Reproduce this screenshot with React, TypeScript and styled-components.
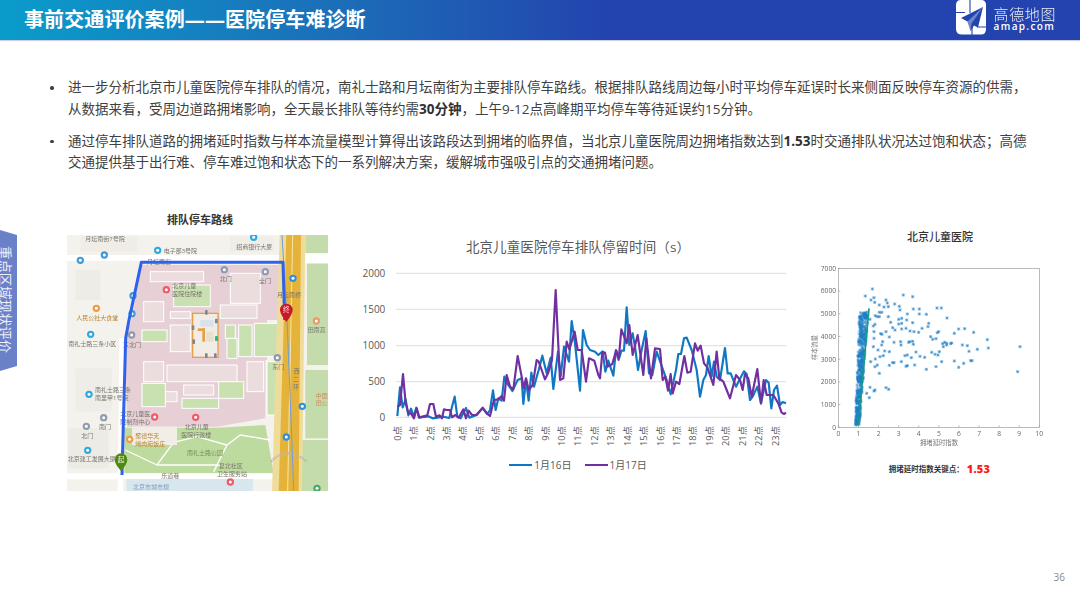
import React from "react";
import styled, { createGlobalStyle } from "styled-components";

const GlobalStyle = createGlobalStyle`
  html, body { margin: 0; padding: 0; background: #ffffff; }
  body { font-family: "Open Sans", "Noto Sans CJK SC", sans-serif; }
`;

const CJK = `"Open Sans", "Noto Sans CJK SC", sans-serif`;

// chart series, read off the picture in 3x crop coordinates
const blue =
  "142,558 150,472 158,532 167,508 175,556 183,536 191,560 199,533 207,563 222,561 235,559 248,565 262,563 278,560 298,564 306,530 314,500 322,560 332,565 348,534 358,563 378,556 398,535 412,552 420,540 429,481 437,540 445,505 455,512 463,440 472,460 487,483 503,450 515,445 520,522 528,450 536,512 544,428 552,470 566,420 577,377 590,430 602,383 610,477 624,365 632,440 642,350 657,395 665,273 675,340 690,482 699,300 710,345 720,360 735,365 745,375 758,364 766,425 775,392 790,437 798,360 808,383 814,362 822,362 830,232 838,345 848,310 855,350 864,420 875,360 887,303 897,430 907,435 920,365 934,405 950,450 962,493 978,420 985,372 993,372 1002,325 1010,323 1025,360 1040,420 1050,500 1060,450 1068,435 1076,378 1085,440 1092,395 1100,440 1110,450 1125,354 1133,430 1142,430 1158,470 1168,450 1182,424 1190,432 1200,510 1208,500 1222,470 1233,520 1248,450 1256,458 1264,535 1272,480 1281,467 1290,525 1298,516 1308,520";
const purple =
  "142,530 150,525 159,432 167,520 175,550 183,550 192,565 200,535 208,562 232,556 240,522 250,522 258,560 268,556 276,565 282,538 290,540 300,540 306,562 316,555 326,563 340,538 348,565 356,542 366,555 380,555 398,533 412,552 420,558 432,510 445,508 455,498 462,512 470,435 480,470 490,478 503,378 515,440 521,475 528,445 536,480 548,465 560,390 566,395 575,420 585,448 594,430 606,390 617,180 630,450 640,445 650,335 658,358 674,305 683,360 695,360 708,455 717,385 733,392 745,435 750,445 757,367 765,368 773,410 787,402 798,362 806,390 814,298 830,340 838,285 848,375 863,315 880,435 889,325 903,445 915,355 930,357 938,450 946,440 954,482 962,432 968,490 978,455 988,462 1003,378 1012,428 1022,425 1035,340 1043,362 1052,347 1062,400 1072,412 1090,465 1100,365 1108,445 1120,455 1130,480 1140,505 1158,435 1170,450 1178,480 1185,432 1195,445 1205,500 1222,417 1233,520 1241,450 1250,495 1270,495 1285,520 1295,548 1302,552 1308,548";

const sparse: [number, number][] = [
  [217,192],[196,213],[222,218],[213,225],[224,232],[258,225],[262,234],[284,237],[298,244],[238,240],[252,246],[265,245],[310,210],[338,215],[300,255],[340,252],[358,252],[411,249],[424,249],[322,267],[358,267],[379,268],[441,279],[265,275],[272,292],[296,283],[305,280],[320,285],[338,293],[305,295],[296,297],[278,308],[285,315],[305,312],[318,310],[386,295],[384,305],[366,310],[356,322],[342,320],[330,318],[416,320],[412,323],[476,312],[494,311],[463,325],[521,322],[392,335],[398,343],[408,341],[562,344],[242,326],[246,328],[258,320],[268,336],[282,352],[302,350],[303,360],[326,352],[340,358],[330,350],[338,349],[395,382],[405,388],[418,380],[414,390],[428,356],[434,352],[440,360],[430,365],[440,355],[455,354],[452,356],[487,360],[502,362],[532,373],[507,379],[565,369],[660,365],[653,440],[512,407],[516,407],[491,415],[476,427],[463,408],[425,410],[408,425],[379,433],[344,420],[318,424],[322,422],[304,410],[282,413],[278,413],[268,421],[315,392],[322,390],[348,381],[360,394],[374,397],[334,398],[258,488],[266,493],[238,445],[232,420],[225,425],[212,410],[226,402],[240,395],[250,392],[254,378],[268,380],[234,375],[220,365],[245,360],[248,350],[222,340],[222,320],[220,303],[225,298],[210,283],[226,272],[238,262],[232,275],[245,262],[238,275],[210,487],[222,498],[225,495],[200,505],[208,518],
];

// dense cloud along the fitted line, small seeded generator so it stays put
const dense: [number, number][] = (() => {
  let s = 17;
  const rnd = () => {
    s = (s * 16807) % 2147483647;
    return s / 2147483647;
  };
  const out: [number, number][] = [];
  for (let i = 0; i < 420; i++) {
    const y = 600 - rnd() * 340;
    const mid = 172 + ((600 - y) / 340) * 20;
    out.push([mid + (rnd() - 0.5) * (12 + ((600 - y) / 340) * 14), y]);
  }
  return out;
})();

const Page = styled.div`
  position: relative;
  width: 1080px;
  height: 592px;
  overflow: hidden;
  display: flex;
  flex-direction: column;
  background: #ffffff;
  font-family: ${CJK};
`;

const Header = styled.header`
  height: 40px;
  flex: none;
  display: flex;
  align-items: flex-start;
  justify-content: space-between;
  padding: 0 24px 0 24px;
  background: linear-gradient(90deg, #0a9ccb 0%, #1c6db8 32%, #2344ae 56%, #2443ae 100%);
  box-shadow: 0 1px 1px rgba(120, 130, 170, 0.35);
`;

const Title = styled.h1`
  margin: 0;
  font-size: 20px;
  line-height: 39px;
  font-weight: 700;
  letter-spacing: 0.1px;
  color: #ffffff;
  white-space: nowrap;
`;

const Brand = styled.div`
  display: flex;
  align-items: flex-start;
  gap: 8px;
  color: #ffffff;
`;

const BrandText = styled.div`
  display: flex;
  flex-direction: column;
  align-items: flex-start;
  padding-top: 7px;
`;

const BrandName = styled.span`
  font-size: 15px;
  line-height: 14px;
  letter-spacing: 0.6px;
  font-weight: 300;
  white-space: nowrap;
  opacity: 0.92;
`;

const BrandUrl = styled.span`
  font-family: "Open Sans", sans-serif;
  font-size: 10px;
  line-height: 11px;
  font-weight: 600;
  letter-spacing: 1.35px;
`;

const SideTab = styled.div`
  position: absolute;
  left: 0;
  top: 230px;
  width: 17px;
  height: 141px;
  background: #6a80c9;
  clip-path: polygon(0 0, 100% 5px, 100% 136px, 0 100%);
  overflow: hidden;
`;

const SideLabel = styled.span`
  position: absolute;
  top: 16px;
  left: -4px;
  writing-mode: vertical-rl;
  text-orientation: sideways;
  font-size: 13.4px;
  line-height: 18px;
  color: #eef0fa;
  white-space: nowrap;
`;

const Bullets = styled.ul`
  list-style: none;
  margin: 37px 0 0;
  padding: 0 50px 0 68px;
`;

const Bullet = styled.li`
  position: relative;
  font-size: 13.5px;
  line-height: 21.5px;
  color: #404040;
  margin-bottom: 10.5px;

  &::before {
    content: "";
    position: absolute;
    left: -18px;
    top: 9px;
    width: 3.5px;
    height: 3.5px;
    border-radius: 50%;
    background: #404040;
  }

  b {
    font-weight: 700;
    color: #303030;
  }
`;

const Figures = styled.section`
  display: flex;
  align-items: flex-start;
  margin-top: 27px;
  padding-left: 67px;
`;

const MapFigure = styled.figure`
  margin: 0;
  width: 261px;
  flex: none;
`;

const MapTitle = styled.figcaption`
  height: 16px;
  padding: 1px 0 0 5px;
  margin-bottom: 7px;
  font-size: 11px;
  line-height: 16px;
  font-weight: 700;
  color: #333333;
  text-align: center;
`;

const MapArt = styled.svg`
  display: block;
  width: 261px;
  height: 256px;
  filter: blur(0.35px);
`;

const ChartFigure = styled.figure`
  margin: 0 0 0 22px;
  padding-top: 27px;
  width: 450px;
  flex: none;
`;

const ChartTitle = styled.figcaption`
  height: 18px;
  font-size: 13.5px;
  line-height: 18px;
  color: #595959;
  text-align: center;
  padding-left: 6px;
  letter-spacing: 0.1px;
`;

const ChartArt = styled.svg`
  display: block;
  width: 450px;
  height: 188px;
  margin-top: 6px;
`;

const Legend = styled.div`
  display: flex;
  justify-content: center;
  gap: 13px;
  margin-top: 7px;
  padding-left: 6px;
  height: 16px;
`;

const LegendItem = styled.span`
  display: flex;
  align-items: center;
  gap: 2px;
  font-size: 10px;
  line-height: 16px;
  color: #595959;
`;

const LegendSwatch = styled.i<{ $color: string }>`
  display: block;
  width: 23px;
  height: 2.5px;
  background: ${(p) => p.$color};
`;

const ScatterFigure = styled.figure`
  margin: 0;
  padding-top: 18px;
  width: 260px;
  flex: none;
`;

const ScatterTitle = styled.figcaption`
  height: 16px;
  padding-left: 20px;
  font-size: 11px;
  line-height: 16px;
  font-weight: 500;
  color: #333333;
  text-align: center;
`;

const ScatterArt = styled.svg`
  display: block;
  width: 260px;
  height: 195px;
  margin-top: 10px;
  filter: blur(0.3px);
`;

const KeyPoint = styled.div`
  display: flex;
  justify-content: center;
  align-items: center;
  gap: 3px;
  height: 16px;
  margin-top: 10px;
  padding-left: 19px;
  font-size: 7.5px;
  font-weight: 700;
  color: #333333;

  b {
    font-size: 11px;
    color: #ff1a1a;
    letter-spacing: 0.3px;
  }
`;

const PageNumber = styled.div`
  margin-top: auto;
  padding: 0 15px 9px 0;
  text-align: right;
  font-size: 10px;
  line-height: 12px;
  color: #8a8a8a;
`;

const Logo = () => (
  <svg width="30" height="35" viewBox="0 0 30 35">
    <path d="M5 0H25Q30 0 30 5V29Q30 34.5 25 34.5H6Q0 34.5 0 29V5Q0 0 5 0Z" fill="#ffffff" />
    <path d="M14 0V13M16 25V35M0 12.5H9M21 27H30" stroke="#2344ae" strokeWidth="1.1" fill="none" />
    <path d="M27 7L5 18L11.5 21.5L14.5 31L18 25.5L22 27.5Z" fill="#2344ae" />
    <path d="M27 7L11.5 21.5L14.5 31L15.5 23.5Z" fill="#ffffff" opacity="0.35" />
  </svg>
);

const mapLabels: [number, number, string, string?][] = [
  [255, 107, "月坛南街7号院"],
  [490, 144, "电子部3号院"],
  [440, 176, "月坛南街"],
  [708, 131, "招商银行大厦"],
  [516, 250, "北京儿童"],
  [516, 274, "医院住院楼"],
  [830, 275, "月坛南桥"],
  [228, 345, "人民公社大食堂", "#b5812f"],
  [204, 422, "南礼士路三条小区"],
  [284, 562, "南礼士路三条"],
  [284, 586, "南里甲1号院"],
  [360, 632, "北京儿童医"],
  [360, 656, "院制剂中心"],
  [553, 672, "北京儿童"],
  [543, 696, "医院行政楼"],
  [405, 698, "聚德华天", "#b5812f"],
  [405, 722, "烤肉宛饭庄", "#b5812f"],
  [560, 751, "南礼士路公园", "#6f8f5a"],
  [202, 768, "北京建工发展大厦"],
  [655, 790, "复北社区"],
  [650, 812, "卫生服务站"],
  [483, 820, "乐道巷"],
  [398, 852, "北京市城市规", "#7f9fc0"],
  [922, 382, "田南高"],
  [946, 578, "中国", "#c98a5f"],
  [946, 600, "田公", "#c98a5f"],
  [880, 505, "西"],
  [878, 528, "二"],
  [878, 552, "环"],
  [296, 672, "南门"],
  [243, 698, "北门"],
  [816, 492, "东门"],
  [658, 228, "北门"],
  [776, 235, "全门"],
  [368, 425, "东北门"],
];

const poiDots: [number, number, string][] = [
  [240, 166, "#3d9bdc"], [312, 150, "#3d9bdc"], [472, 136, "#2ea8e0"], [760, 97, "#2ea8e0"],
  [398, 272, "#3d9bdc"], [395, 326, "#3d9bdc"], [271, 388, "#2ea8e0"], [394, 390, "#8d9ab0"],
  [288, 310, "#f09a3a"], [498, 254, "#ee5a67"], [672, 194, "#8d9ab0"], [795, 200, "#8d9ab0"],
  [878, 220, "#2e8fe0"], [948, 348, "#e89a6a"], [831, 458, "#8d9ab0"], [906, 604, "#2e8fe0"],
  [266, 568, "#2ea8e0"], [310, 638, "#8d9ab0"], [258, 664, "#8d9ab0"], [262, 736, "#2ea8e0"],
  [463, 636, "#ee5a67"], [586, 637, "#ee5a67"], [388, 703, "#f09a3a"], [858, 696, "#2e8fe0"],
  [690, 831, "#ee5a67"], [950, 850, "#48a868"],
];

// paler hospital buildings, white outline reads as the inner lanes
const blocks: [number, number, number, number][] = [
  [450, 200, 160, 30], [690, 205, 90, 90], [510, 320, 60, 20], [430, 470, 60, 60],
  [500, 480, 210, 50], [430, 560, 100, 30], [550, 540, 90, 30], [740, 470, 50, 90],
  [430, 290, 60, 60], [510, 360, 60, 80], [660, 300, 110, 40],
];

const greens: [number, number, number, number][] = [
  [425, 375, 75, 35], [520, 240, 110, 65], [675, 360, 30, 40], [715, 360, 40, 95],
  [762, 355, 72, 100], [680, 400, 30, 60], [800, 470, 38, 160], [425, 535, 70, 70],
  [655, 530, 75, 50], [545, 580, 110, 30],
];

const MapDrawing = () => (
  <MapArt viewBox="200 90 783 768" preserveAspectRatio="none">
    <rect x="200" y="90" width="783" height="768" fill="#f4f2ec" />
    {/* neighbouring blocks */}
    <rect x="225" y="195" width="75" height="90" fill="#eeece6" />
    <rect x="225" y="490" width="110" height="130" fill="#efede7" />
    <rect x="205" y="670" width="120" height="120" fill="#edebe5" />
    <rect x="240" y="95" width="170" height="45" fill="#efede6" />
    <rect x="690" y="95" width="130" height="45" fill="#efede6" />
    {/* right hand parks */}
    <rect x="915" y="90" width="68" height="55" fill="#c4dcab" />
    <rect x="920" y="175" width="63" height="305" fill="#c4dcab" />
    <rect x="915" y="495" width="68" height="205" fill="#c4dcab" />
    <rect x="905" y="705" width="78" height="153" fill="#c4dcab" />
    {/* hospital grounds */}
    <path
      d="M420 180H840V345H800V465H795V640L650 665H380L375 400L395 340Z"
      fill="#e6d0d6"
    />
    {blocks.map(([x, y, w, h], i) => (
      <rect key={i} x={x} y={y} width={w} height={h} fill="#ebdddd" stroke="#ffffff" strokeWidth="3" />
    ))}
    {greens.map(([x, y, w, h], i) => (
      <rect key={i} x={x} y={y} width={w} height={h} fill="#c9e0b0" stroke="#ffffff" strokeWidth="3" />
    ))}
    <rect x="577" y="325" width="76" height="132" fill="#f2ece6" stroke="#e8a048" strokeWidth="4" />
    <rect x="592" y="370" width="22" height="8" fill="#e8a048" />
    <rect x="606" y="370" width="8" height="40" fill="#e8a048" />
    <rect x="600" y="345" width="40" height="20" fill="#d9e2ec" />
    <rect x="618" y="380" width="22" height="30" fill="#e6e0d0" />
    {[[618, 322], [648, 348], [578, 368], [580, 410], [618, 452], [645, 452]].map(([x, y], i) => (
      <rect key={i} x={x - 4} y={y - 7} width="8" height="14" rx="2" fill="#7d8794" />
    ))}
    <rect x="644" y="393" width="9" height="15" rx="2" fill="#2fb88a" />
    {/* south park */}
    <path d="M372 668H650L795 660L820 805H372Z" fill="#bedb9f" />
    <path
      d="M375 735L470 780L520 712L590 695L680 720L640 800M680 720L720 690L810 705M470 780L660 780"
      fill="none"
      stroke="#ffffff"
      strokeWidth="4"
    />
    <rect x="395" y="665" width="135" height="55" fill="#f2eee6" />
    {/* roads */}
    <rect x="200" y="150" width="783" height="18" fill="#ffffff" />
    <rect x="200" y="805" width="640" height="18" fill="#ffffff" />
    <rect x="905" y="145" width="78" height="30" fill="#ffffff" />
    <path d="M365 400L360 858" stroke="#ffffff" strokeWidth="16" fill="none" />
    <rect x="378" y="822" width="380" height="36" fill="#d8e6ee" />
    {/* expressway */}
    <path d="M838 90H915L905 860H815Z" fill="#f0dc9a" />
    <path d="M858 90H902L895 860H835Z" fill="#e6b33a" />
    <path d="M877 90L862 860" stroke="#f6e6a8" strokeWidth="3" fill="none" />
    <path d="M812 770Q860 720 920 770" stroke="#b9b8ae" strokeWidth="7" fill="none" strokeDasharray="5 3" />
    {poiDots.map(([x, y, c], i) => (
      <g key={i}>
        <circle cx={x} cy={y} r="11" fill={c} />
        <circle cx={x} cy={y} r="4.5" fill="#ffffff" />
      </g>
    ))}
    {mapLabels.map(([x, y, t, c], i) => (
      <text key={i} x={x} y={y} fontSize="18" fill={c || "#77756e"} fontFamily={CJK}>
        {t}
      </text>
    ))}
    {/* route */}
    <path d="M845 90L860 340L878 800L880 858" stroke="#6d9ee2" strokeWidth="3" fill="none" />
    <path
      d="M365 810L366 770L376 400L385 350L423 172H848L853 345"
      stroke="#2f62ea"
      strokeWidth="9"
      fill="none"
      strokeLinejoin="round"
    />
    {/* pins */}
    <path d="M362 745a19 19 0 0 1 19 19q0 12-19 34q-19-22-19-34a19 19 0 0 1 19-19Z" fill="#4f8a14" />
    <text x="362" y="771" fontSize="20" fill="#eaf5da" textAnchor="middle" fontFamily={CJK}>起</text>
    <path d="M858 296a19 19 0 0 1 19 19q0 12-19 36q-19-24-19-36a19 19 0 0 1 19-19Z" fill="#c8182c" />
    <text x="858" y="322" fontSize="20" fill="#fbe3e3" textAnchor="middle" fontFamily={CJK}>终</text>
  </MapArt>
);

const LineChart = () => (
  <ChartArt viewBox="0 96 1350 564">
    {[130, 238, 347, 455, 562].map((y) => (
      <line key={y} x1="138" x2="1308" y1={y} y2={y} stroke="#e4e4e4" strokeWidth="4" />
    ))}
    {["2000", "1500", "1000", "500", "0"].map((t, i) => (
      <text key={t} x="106" y={141 + i * 108} fontSize="30" fill="#595959" textAnchor="end" fontFamily={CJK}>
        {t}
      </text>
    ))}
    {Array.from({ length: 24 }, (_, h) => (
      <text
        key={h}
        transform={`translate(${152 + h * 49.3} 588) rotate(-90)`}
        fontSize="28"
        fill="#595959"
        textAnchor="end"
        fontFamily={CJK}
      >
        {h}点
      </text>
    ))}
    <polyline points={blue} fill="none" stroke="#0f78c4" strokeWidth="6.5" strokeLinejoin="round" />
    <polyline points={purple} fill="none" stroke="#7030a0" strokeWidth="6.5" strokeLinejoin="round" />
  </ChartArt>
);

const Star = ({ x, y, o }: { x: number; y: number; o: number }) => (
  <path
    d={`M${x - 5} ${y}H${x + 5}M${x} ${y - 5}V${y + 5}M${x - 4} ${y - 4}L${x + 4} ${y + 4}M${x - 4} ${y + 4}L${x + 4} ${y - 4}`}
    stroke="#1f7fc4"
    strokeWidth="1.9"
    opacity={o}
  />
);

const ScatterPlot = () => (
  <ScatterArt viewBox="0 90 780 585">
    <rect x="115" y="130" width="603" height="477" fill="#ffffff" stroke="#9a9a9a" strokeWidth="2" />
    {[0, 1, 2, 3, 4, 5, 6, 7, 8, 9, 10].map((n) => (
      <g key={n}>
        <line x1={115 + n * 60.3} x2={115 + n * 60.3} y1="607" y2="601" stroke="#9a9a9a" strokeWidth="2" />
        <text x={115 + n * 60.3} y="634" fontSize="20" fill="#666666" textAnchor="middle" fontFamily={CJK}>
          {n}
        </text>
      </g>
    ))}
    {[0, 1, 2, 3, 4, 5, 6, 7].map((n) => (
      <g key={n}>
        <line x1="115" x2="121" y1={607 - n * 68.14} y2={607 - n * 68.14} stroke="#9a9a9a" strokeWidth="2" />
        <text x="108" y={614 - n * 68.14} fontSize="20" fill="#666666" textAnchor="end" fontFamily={CJK}>
          {n * 1000}
        </text>
      </g>
    ))}
    <text x="417" y="661" fontSize="19" fill="#777777" textAnchor="middle" fontFamily={CJK}>
      拥堵延时指数
    </text>
    <text
      transform="translate(52 368) rotate(-90)"
      fontSize="19"
      fill="#777777"
      textAnchor="middle"
      fontFamily={CJK}
    >
      样本流量
    </text>
    {dense.map(([x, y], i) => (
      <Star key={i} x={x} y={y} o={0.75} />
    ))}
    {sparse.map(([x, y], i) => (
      <Star key={i} x={x} y={y} o={0.9} />
    ))}
    <line x1="175" y1="600" x2="207" y2="250" stroke="#149a8c" strokeWidth="5" />
  </ScatterArt>
);

export default function App() {
  return (
    <>
      <GlobalStyle />
      <Page>
        <Header>
          <Title>事前交通评价案例——医院停车难诊断</Title>
          <Brand>
            <Logo />
            <BrandText>
              <BrandName>高德地图</BrandName>
              <BrandUrl>amap.com</BrandUrl>
            </BrandText>
          </Brand>
        </Header>

        <SideTab>
          <SideLabel>重点区域现状评价</SideLabel>
        </SideTab>

        <Bullets>
          <Bullet>
            进一步分析北京市儿童医院停车排队的情况，南礼士路和月坛南街为主要排队停车路线。根据排队路线周边每小时平均停车延误时长来侧面反映停车资源的供需，
            从数据来看，受周边道路拥堵影响，全天最长排队等待约需<b>30分钟</b>，上午9-12点高峰期平均停车等待延误约15分钟。
          </Bullet>
          <Bullet>
            通过停车排队道路的拥堵延时指数与样本流量模型计算得出该路段达到拥堵的临界值，当北京儿童医院周边拥堵指数达到<b>1.53</b>时交通排队状况达过饱和状态；高德交通提供基于出行难、停车难过饱和状态下的一系列解决方案，缓解城市强吸引点的交通拥堵问题。
          </Bullet>
        </Bullets>

        <Figures>
          <MapFigure>
            <MapTitle>排队停车路线</MapTitle>
            <MapDrawing />
          </MapFigure>

          <ChartFigure>
            <ChartTitle>北京儿童医院停车排队停留时间（s）</ChartTitle>
            <LineChart />
            <Legend>
              <LegendItem>
                <LegendSwatch $color="#0f78c4" />
                1月16日
              </LegendItem>
              <LegendItem>
                <LegendSwatch $color="#7030a0" />
                1月17日
              </LegendItem>
            </Legend>
          </ChartFigure>

          <ScatterFigure>
            <ScatterTitle>北京儿童医院</ScatterTitle>
            <ScatterPlot />
            <KeyPoint>
              拥堵延时指数关键点：<b>1.53</b>
            </KeyPoint>
          </ScatterFigure>
        </Figures>

        <PageNumber>36</PageNumber>
      </Page>
    </>
  );
}
